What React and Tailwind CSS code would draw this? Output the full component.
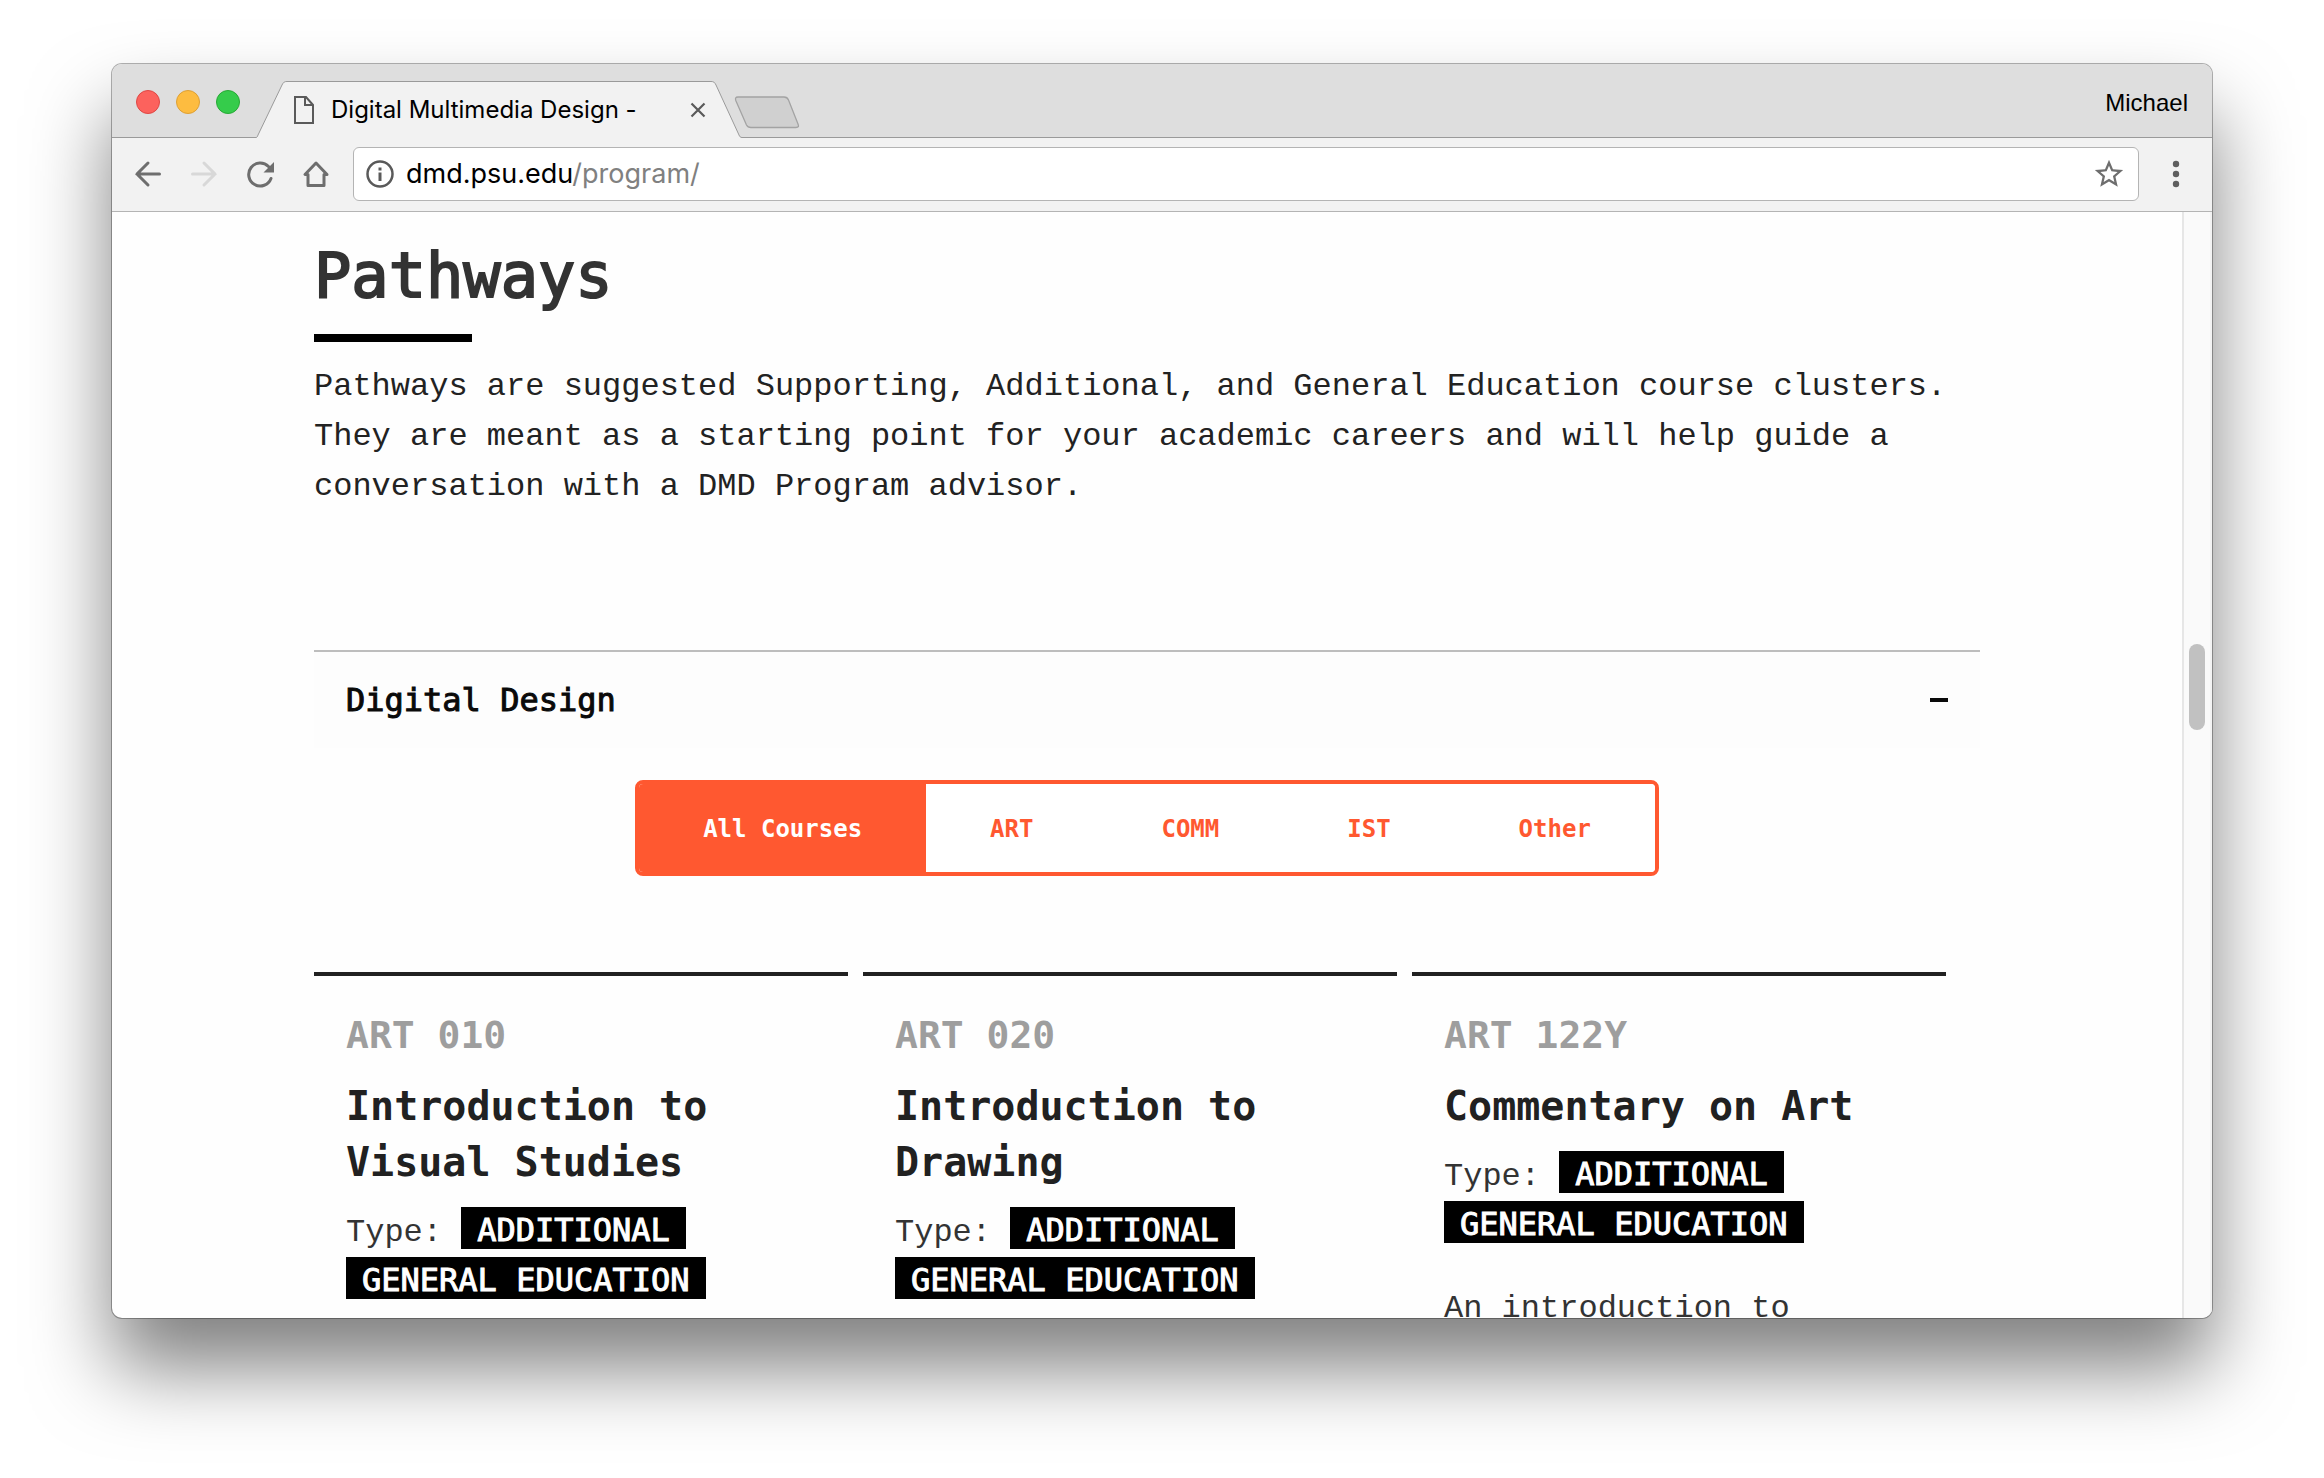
import React, { useState } from "react";

const filters = ["All Courses", "ART", "COMM", "IST", "Other"];

const courses = [
  { code: "ART 010", title: "Introduction to Visual Studies", types: ["ADDITIONAL", "GENERAL EDUCATION"] },
  { code: "ART 020", title: "Introduction to Drawing", types: ["ADDITIONAL", "GENERAL EDUCATION"] },
  {
    code: "ART 122Y",
    title: "Commentary on Art",
    types: ["ADDITIONAL", "GENERAL EDUCATION"],
    description: "An introduction to",
  },
];

function TitleBar() {
  return (
    <header className="flex h-[74px] shrink-0 items-end border-b border-[#9a9a9a] bg-[#dedede]">
      <div className="flex shrink-0 gap-4 self-center pt-0.5 pl-6">
        <button aria-label="Close window" className="size-6 rounded-full border border-[#df4744] bg-[#fc625d]" />
        <button aria-label="Minimize window" className="size-6 rounded-full border border-[#dea034] bg-[#fdbc40]" />
        <button aria-label="Zoom window" className="size-6 rounded-full border border-[#27a935] bg-[#35cc4b]" />
      </div>
      <div className="relative -mb-px ml-4 flex h-[57px] w-[486px] shrink-0 items-center pr-9 pl-[37px]">
        <svg className="absolute inset-0" width="486" height="57" viewBox="0 0 486 57" fill="none" aria-hidden="true">
          <path d="M0 57V56.500C1 56.500 1.500 55.500 2 54L26 4C27.500 1 28.500 0.500 31 0.500H455C457.500 0.500 458.500 1 460 4L483 54C483.500 55.500 484.500 56.500 486 56.500V57Z" fill="#f2f2f2" />
          <path d="M0 56.500C1 56.500 1.500 55.500 2 54L26 4C27.500 1 28.500 0.500 31 0.500H455C457.500 0.500 458.500 1 460 4L483 54C483.500 55.500 484.500 56.500 486 56.500" stroke="#9a9a9a" />
        </svg>
        <svg className="relative shrink-0" width="22" height="30" viewBox="0 0 22 30" fill="none" stroke="#5a5a5a" strokeWidth="2" aria-hidden="true">
          <path d="M2 2H13L20 10V28H2Z" />
          <path d="M12 2V10H20" />
        </svg>
        <span className="relative ml-4 grow font-['Inter'] text-2xl leading-8 whitespace-nowrap text-black">
          Digital Multimedia Design -
        </span>
        <button aria-label="Close tab" className="relative">
          <svg width="16" height="16" viewBox="0 0 16 16" stroke="#5a5a5a" strokeWidth="2.200" aria-hidden="true">
            <path d="M1.500 1.500L14.500 14.500M14.500 1.500L1.500 14.500" />
          </svg>
        </button>
      </div>
      <button aria-label="New tab" className="-ml-2 shrink-0 pb-2">
        <svg width="66" height="33" viewBox="0 0 66 33" aria-hidden="true">
          <path d="M4 1H50C52.500 1 53.500 1.500 54.500 4L64 28C65 30.500 64.500 31.500 62 31.500H17C14.500 31.500 13.500 31 12.500 29L2 5C1 2.500 1.500 1 4 1Z" fill="#d0d0d0" stroke="#a3a3a3" strokeWidth="1.300" />
        </svg>
      </button>
      <button className="mr-6 ml-auto self-center pt-1 font-['Liberation_Sans'] text-2xl text-black">Michael</button>
    </header>
  );
}

function Toolbar() {
  return (
    <nav className="flex h-[74px] shrink-0 items-center border-b border-[#b4b4b4] bg-[#f2f2f2] pr-[30px] pb-px pl-5">
      <div className="flex gap-6 text-[#6e6e6e]">
        <button aria-label="Back">
          <svg width="32" height="32" viewBox="0 0 32 32" fill="none" stroke="currentColor" strokeWidth="3" strokeLinecap="round" aria-hidden="true">
            <path d="M27.500 16H5M16 5L5 16L16 27" />
          </svg>
        </button>
        <button aria-label="Forward" className="text-[#d8d8d8]">
          <svg width="32" height="32" viewBox="0 0 32 32" fill="none" stroke="currentColor" strokeWidth="3" strokeLinecap="round" aria-hidden="true">
            <path d="M4.500 16H27M16 5L27 16L16 27" />
          </svg>
        </button>
        <button aria-label="Reload">
          <svg width="32" height="32" viewBox="0 0 32 32" fill="none" aria-hidden="true">
            <path d="M27 20.500A11.500 11.500 0 1 1 24.500 8.500" stroke="currentColor" strokeWidth="3" strokeLinecap="round" />
            <path d="M30 4V14.500H19.500Z" fill="currentColor" />
          </svg>
        </button>
        <button aria-label="Home">
          <svg width="32" height="32" viewBox="0 0 32 32" fill="none" stroke="currentColor" strokeWidth="3" strokeLinejoin="round" aria-hidden="true">
            <path d="M16 5L5 16.500H8V27.500H24V16.500H27Z" />
          </svg>
        </button>
      </div>
      <div className="ml-[21px] flex h-[54px] grow items-center rounded-md border border-[#b4b4b4] bg-white pr-3 pl-3">
        <svg width="28" height="28" viewBox="0 0 28 28" aria-hidden="true">
          <circle cx="14" cy="14" r="12.500" fill="none" stroke="#5a5a5a" strokeWidth="2.500" />
          <path d="M12.500 7.500H15.500V10.500H12.500ZM12.500 12.500H15.500V21H12.500Z" fill="#5a5a5a" />
        </svg>
        <a href="#program" className="ml-3 grow font-['Inter'] text-[27px] leading-9 text-[#808080]">
          <span className="text-black">dmd.psu.edu</span>/program/
        </a>
        <button aria-label="Bookmark this page">
          <svg width="34" height="34" viewBox="0 0 24 24" fill="#6e6e6e" aria-hidden="true">
            <path d="M22 9.240l-7.190-.620L12 2 9.190 8.630 2 9.240l5.460 4.730L5.820 21 12 17.270 18.180 21l-1.630-7.030L22 9.240zM12 15.400l-3.760 2.270 1-4.280-3.320-2.880 4.380-.380L12 6.100l1.710 4.040 4.380.380-3.320 2.880 1 4.280L12 15.400z" />
          </svg>
        </button>
      </div>
      <button aria-label="Menu" className="ml-[31px]">
        <svg width="12" height="28" viewBox="0 0 12 28" fill="#5f5f5f" aria-hidden="true">
          <circle cx="6" cy="4" r="3.200" />
          <circle cx="6" cy="14" r="3.200" />
          <circle cx="6" cy="24" r="3.200" />
        </svg>
      </button>
    </nav>
  );
}

function CourseCard({ course }) {
  return (
    <article className="border-t-4 border-[#212121] px-8 pt-[34px] text-[#212121]">
      <p className="font-['DejaVu_Sans_Mono'] text-[38px] leading-[50px] font-bold text-[#9e9e9e]">{course.code}</p>
      <h3 className="mt-[18px] font-['DejaVu_Sans_Mono'] text-[40px] leading-[56px] font-bold">{course.title}</h3>
      <p className="mt-[18px] text-[32px] leading-[50px] text-[#333]">
        Type:{" "}
        {course.types.map((type) => (
          <React.Fragment key={type}>
            <span className="bg-black px-4 pt-1 font-['DejaVu_Sans_Mono'] leading-none whitespace-nowrap text-white [-webkit-text-stroke:1px]">
              {type}
            </span>{" "}
          </React.Fragment>
        ))}
      </p>
      {course.description && <p className="mt-8 text-[32px] leading-[50px] text-[#333]">{course.description}</p>}
    </article>
  );
}

export default function App() {
  const [active, setActive] = useState("All Courses");
  const [open, setOpen] = useState(true);
  return (
    <div className="flex h-screen flex-col overflow-hidden bg-white px-28 pt-16 pb-40">
      <div className="flex min-h-0 grow flex-col overflow-hidden rounded-[10px] bg-[#fefefe] shadow-[0_0_0_1px_rgba(0,0,0,0.3),0_50px_80px_rgba(0,0,0,0.5)]">
        <TitleBar />
        <Toolbar />
        <div className="flex min-h-0 grow">
          <main className="grow overflow-hidden pr-[202px] pl-[202px] font-['Liberation_Mono',monospace]">
            <h1 className="mt-7 font-['DejaVu_Sans_Mono'] text-[62px] leading-[72px] text-[#333] [-webkit-text-stroke:2px]">
              Pathways
            </h1>
            <div className="mt-[22px] h-2 w-[158px] bg-black" />
            <p className="mt-5 text-[32px] leading-[50px] text-[#222]">
              Pathways are suggested Supporting, Additional, and General Education course clusters. They are meant as a
              starting point for your academic careers and will help guide a conversation with a DMD Program advisor.
            </p>
            <section className="mt-[138px]">
              <h2 className="border-t-2 border-[#bdbdbd] bg-[#fdfdfd]">
                <button
                  aria-expanded={open}
                  onClick={() => setOpen(!open)}
                  className="flex h-24 w-full items-center justify-between px-8 font-['DejaVu_Sans_Mono'] text-[32px] text-[#0a0a0a] [-webkit-text-stroke:1px]"
                >
                  Digital Design
                  <span className="h-1 w-[18px] bg-[#0a0a0a]" />
                </button>
              </h2>
              {open && (
                <>
                  <div className="mt-8 flex justify-center">
                    <div className="flex h-24 overflow-hidden rounded-lg border-4 border-[#ff5830]">
                      {filters.map((name) => (
                        <button
                          key={name}
                          aria-pressed={active === name}
                          onClick={() => setActive(name)}
                          className={
                            active === name
                              ? "bg-[#ff5830] px-16 pt-0.5 font-['DejaVu_Sans_Mono'] text-2xl font-bold whitespace-nowrap text-white"
                              : "bg-white px-16 pt-0.5 font-['DejaVu_Sans_Mono'] text-2xl font-bold whitespace-nowrap text-[#ff5830]"
                          }
                        >
                          {name}
                        </button>
                      ))}
                    </div>
                  </div>
                  <div className="mt-24 grid grid-cols-3 gap-[15px] pr-[34px]">
                    {courses.map((course) => (
                      <CourseCard key={course.code} course={course} />
                    ))}
                  </div>
                </>
              )}
            </section>
          </main>
          <div className="flex w-[30px] shrink-0 flex-col items-center border-x-2 border-l-[#e6e6e6] border-r-[#f3f3f3] bg-[#fafafa] pt-[432px]">
            <div className="h-[86px] w-4 rounded-full bg-[#c1c1c1]" />
          </div>
        </div>
      </div>
    </div>
  );
}
